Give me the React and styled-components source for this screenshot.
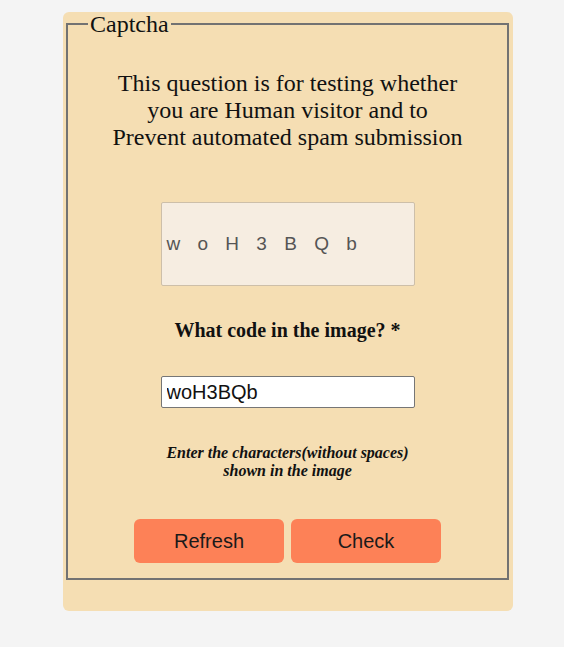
import React from "react";
import styled, { createGlobalStyle } from "styled-components";

const GlobalStyle = createGlobalStyle`
  body {
    margin: 0;
    background: #f4f4f4;
    font-family: "Liberation Serif", "Times New Roman", serif;
  }
`;

const Page = styled.div`
  padding: 12px 0 37px 63px;
`;

const Card = styled.div`
  width: 450px;
  box-sizing: border-box;
  background: #f5deb3;
  border-radius: 6px;
  padding: 0 2px 31px 1px;
`;

const Fieldset = styled.fieldset`
  margin: 0 2px;
  border: 2px solid #727272;
  padding: 0 20px 15px;
  display: flex;
  flex-direction: column;
  align-items: center;
`;

const Legend = styled.legend`
  font-size: 24px;
  line-height: 24px;
  padding: 0 2px;
  color: #111;
`;

const Question = styled.p`
  margin: 34px 0 0;
  font-size: 24px;
  line-height: 27px;
  text-align: center;
  color: #111;
`;

const CaptchaBox = styled.div`
  margin-top: 51px;
  width: 254px;
  height: 84px;
  box-sizing: border-box;
  border: 1px solid #cdbfa9;
  border-radius: 2px;
  background: #f6ede1;
  display: flex;
  align-items: center;
  padding-left: 5px;
  font-family: "Liberation Sans", Arial, sans-serif;
  font-size: 19px;
  letter-spacing: 6px;
  color: #555;
`;

const Label = styled.label`
  margin-top: 33px;
  font-size: 20px;
  line-height: 23px;
  font-weight: bold;
  color: #111;
`;

const CodeInput = styled.input`
  margin-top: 34px;
  width: 254px;
  height: 32px;
  box-sizing: border-box;
  border: 1px solid #767676;
  border-radius: 2px;
  padding: 0 5px;
  font-family: "Liberation Sans", Arial, sans-serif;
  font-size: 20px;
  color: #111;
  background: #fff;
`;

const Hint = styled.p`
  margin: 36px 0 0;
  font-size: 16px;
  line-height: 18px;
  font-style: italic;
  font-weight: bold;
  text-align: center;
  color: #111;
`;

const Buttons = styled.div`
  margin-top: 39px;
  display: flex;
  gap: 7px;
`;

const Button = styled.button`
  width: 150px;
  height: 44px;
  border: none;
  border-radius: 6px;
  background: #fd8157;
  font-family: "Liberation Sans", Arial, sans-serif;
  font-size: 20px;
  color: #1a1a1a;
  cursor: pointer;
`;

export default function App() {
  return (
    <Page>
      <GlobalStyle />
      <Card>
        <Fieldset>
          <Legend>Captcha</Legend>
          <Question>
            This question is for testing whether
            <br />
            you are Human visitor and to
            <br />
            Prevent automated spam submission
          </Question>
          <CaptchaBox>w o H 3 B Q b</CaptchaBox>
          <Label htmlFor="code">What code in the image? *</Label>
          <CodeInput id="code" defaultValue="woH3BQb" />
          <Hint>
            Enter the characters(without spaces)
            <br />
            shown in the image
          </Hint>
          <Buttons>
            <Button>Refresh</Button>
            <Button>Check</Button>
          </Buttons>
        </Fieldset>
      </Card>
    </Page>
  );
}
